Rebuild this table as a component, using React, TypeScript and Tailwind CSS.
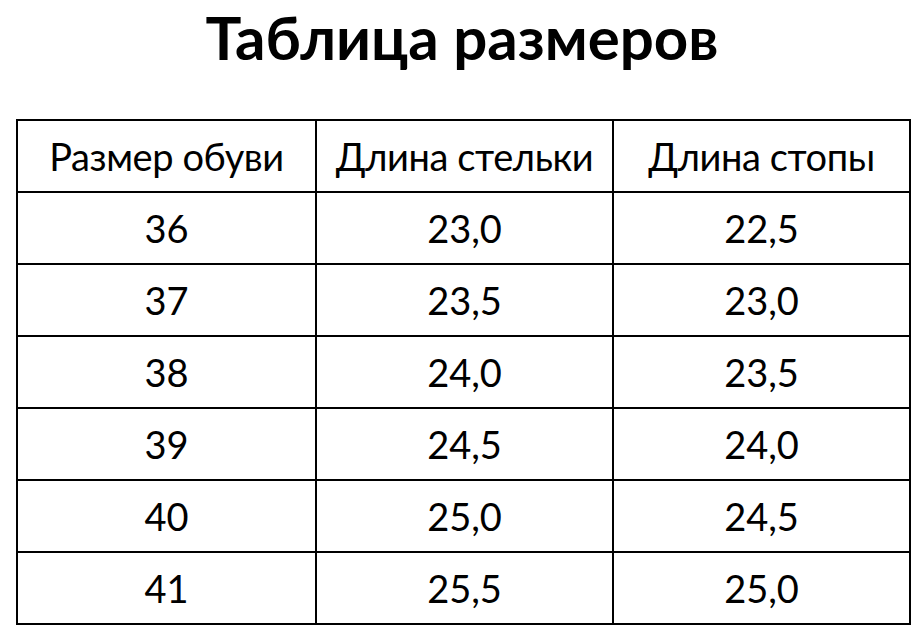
const rows = [
  ["36", "23,0", "22,5"],
  ["37", "23,5", "23,0"],
  ["38", "24,0", "23,5"],
  ["39", "24,5", "24,0"],
  ["40", "25,0", "24,5"],
  ["41", "25,5", "25,0"],
];

const headers = ["Размер обуви", "Длина стельки", "Длина стопы"];

export default function App() {
  return (
    <div className="h-[641px] w-[924px] bg-white font-['Lato',sans-serif] text-black">
      <h1 className="pt-[2px] text-center text-[60px] font-bold leading-[70px]">
        Таблица размеров
      </h1>
      <table className="ml-[16px] mt-[47px] w-[893px] table-fixed border-collapse">
        <colgroup>
          <col className="w-[299px]" />
          <col className="w-[297px]" />
          <col className="w-[297px]" />
        </colgroup>
        <thead>
          <tr className="h-[72px]">
            {headers.map((h) => (
              <th
                key={h}
                className="border-2 border-black p-0 text-center text-[38px] font-normal tracking-[-0.4px]"
              >
                {h}
              </th>
            ))}
          </tr>
        </thead>
        <tbody>
          {rows.map((r) => (
            <tr key={r[0]} className="h-[72px]">
              {r.map((v, i) => (
                <td
                  key={i}
                  className="border-2 border-black p-0 text-center text-[38px]"
                >
                  {v}
                </td>
              ))}
            </tr>
          ))}
        </tbody>
      </table>
    </div>
  );
}
